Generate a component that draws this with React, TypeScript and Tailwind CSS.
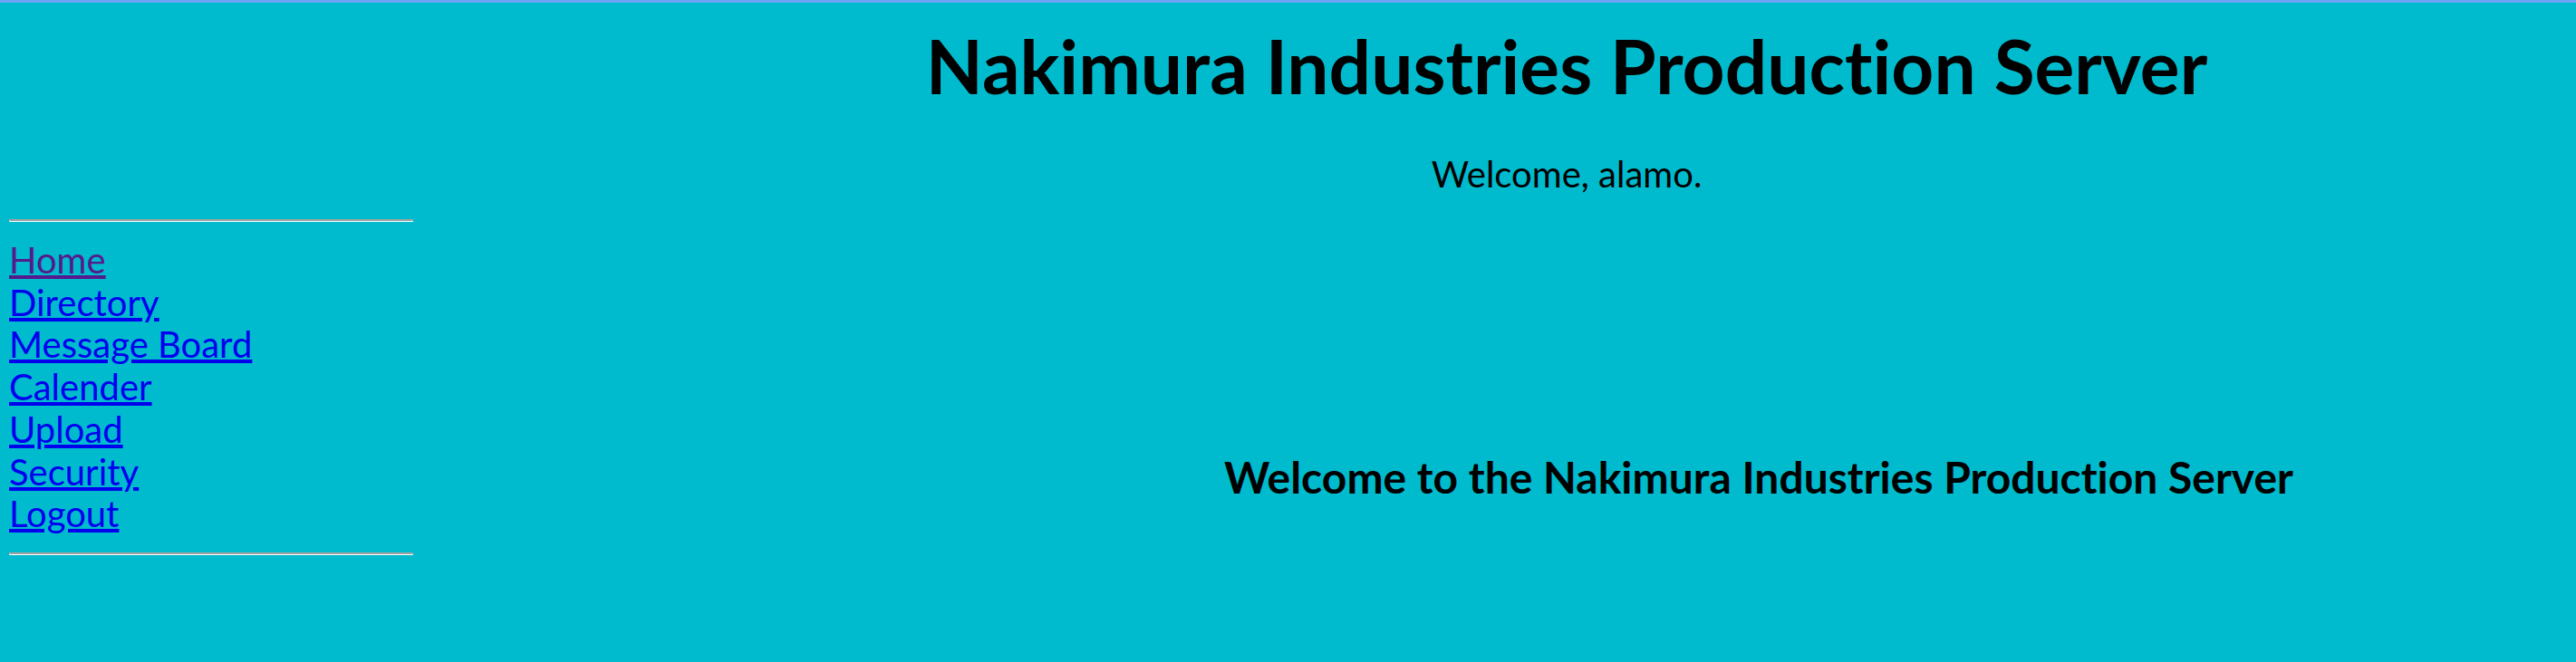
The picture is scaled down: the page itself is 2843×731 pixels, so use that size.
import React from "react";

const links = [
  { label: "Home", visited: true },
  { label: "Directory" },
  { label: "Message Board" },
  { label: "Calender" },
  { label: "Upload" },
  { label: "Security" },
  { label: "Logout" },
];

function Rule() {
  return (
    <div className="w-[446px] h-[3px] border-t-2 border-t-[#a0a0a0] border-b border-b-white border-l border-l-[#c8c8c8]" />
  );
}

export default function App() {
  return (
    <div
      className="min-h-[731px] bg-[#00bbce] text-black [font-variant-ligatures:none]"
      style={{ fontFamily: 'Lato, "Open Sans", sans-serif' }}
    >
      <div className="h-[3px] bg-[#6fa4f4]" />
      <div className="pl-[615px] text-center">
        <h1 className="mt-[29px] text-[82px] leading-[80px] font-bold">
          Nakimura Industries Production Server
        </h1>
        <p className="mt-[56px] text-[40px] leading-[48px]">Welcome, alamo.</p>
      </div>
      <div className="flex">
        <div className="w-[466px] shrink-0 pl-[10px] pt-[26px]">
          <Rule />
          <nav className="flex flex-col items-start pt-[19px] pb-[19px]">
            {links.map((l) => (
              <a
                key={l.label}
                href="#"
                className={
                  "text-[40px] leading-[46.7px] underline " +
                  (l.visited ? "text-[#551a8b]" : "text-[#0000ee]")
                }
              >
                {l.label}
              </a>
            ))}
          </nav>
          <Rule />
        </div>
        <div className="flex-1 pl-[573px] text-center pt-[283px]">
          <h3 className="text-[48px] leading-[56px] font-bold">
            Welcome to the Nakimura Industries Production Server
          </h3>
        </div>
      </div>
    </div>
  );
}
